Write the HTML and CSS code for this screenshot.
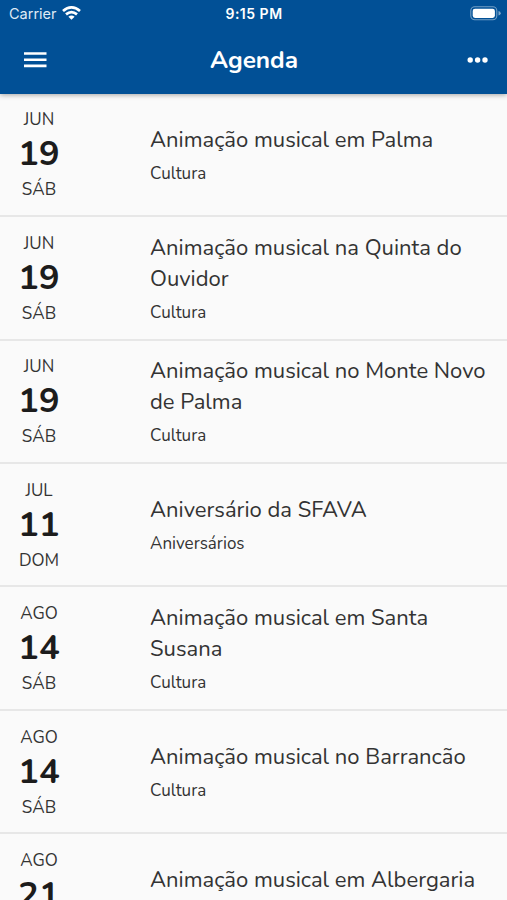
FILE: index.html
```html
<!DOCTYPE html>
<html lang="pt">
<head>
<meta charset="utf-8">
<title>Agenda</title>
<link rel="stylesheet" href="styles.css">
</head>
<body>
<header class="header">
  <div class="status">
    <div class="carrier"><span>Carrier</span>
      <svg class="wifi" width="19" height="14" viewBox="0 0 19 14" fill="none" stroke="#fff" stroke-width="2.7"><path d="M1 5.1Q9.5-2.3 18 5.1"/><path d="M4 8.4Q9.5 3.7 15 8.4"/><path d="M6.4 10.8Q9.5 8 12.6 10.8L9.5 13.8Z" fill="#fff" stroke="none"/></svg>
    </div>
    <span class="time">9:15 PM</span>
    <svg class="battery" width="31" height="15" viewBox="0 0 31 15"><rect x=".8" y=".8" width="26" height="13" rx="4" fill="none" stroke="#fff" stroke-opacity=".45" stroke-width="1.1"/><rect x="2.7" y="2.7" width="22.2" height="9.2" rx="2.3" fill="#fff"/><path d="M28.5 5Q30.7 5.6 30.7 7.3T28.5 9.6Z" fill="#fff" opacity=".5"/></svg>
  </div>
  <div class="toolbar">
    <svg width="24" height="18" viewBox="0 0 24 18" fill="#fff"><path d="M1 1.2h22.5v2.6H1zM1 7.4h22.5v2.6H1zM1 13.6h22.5v2.6H1z"/></svg>
    <h1>Agenda</h1>
    <svg class="more" width="22" height="8" viewBox="0 0 22 8" fill="#fff"><circle cx="3.2" cy="4" r="2.7"/><circle cx="10.6" cy="4" r="2.7"/><circle cx="18" cy="4" r="2.7"/></svg>
  </div>
</header>
<main>
  <article class="event"><div class="date"><span>JUN</span><b>19</b><span>SÁB</span></div><div class="info"><h2>Animação musical em Palma</h2><p>Cultura</p></div></article>
  <article class="event"><div class="date"><span>JUN</span><b>19</b><span>SÁB</span></div><div class="info"><h2>Animação musical na Quinta do<br>Ouvidor</h2><p>Cultura</p></div></article>
  <article class="event"><div class="date"><span>JUN</span><b>19</b><span>SÁB</span></div><div class="info"><h2>Animação musical no Monte Novo<br>de Palma</h2><p>Cultura</p></div></article>
  <article class="event"><div class="date"><span>JUL</span><b>11</b><span>DOM</span></div><div class="info"><h2>Aniversário da SFAVA</h2><p>Aniversários</p></div></article>
  <article class="event"><div class="date"><span>AGO</span><b>14</b><span>SÁB</span></div><div class="info"><h2>Animação musical em Santa<br>Susana</h2><p>Cultura</p></div></article>
  <article class="event"><div class="date"><span>AGO</span><b>14</b><span>SÁB</span></div><div class="info"><h2>Animação musical no Barrancão</h2><p>Cultura</p></div></article>
  <article class="event last"><div class="date"><span>AGO</span><b>21</b></div><div class="info"><h2>Animação musical em Albergaria</h2></div></article>
</main>
</body>
</html>
```
FILE: styles.css
```css
* { box-sizing: border-box; margin: 0; padding: 0; }
body {
  height: 900px;
  overflow: hidden;
  display: flex;
  flex-direction: column;
  background: #fafafa;
  color: #333;
  font-family: Nunito, Lato, sans-serif;
}
svg { display: block; flex: none; }
.header {
  flex: none;
  height: 93.5px;
  background: #015096;
  color: #fff;
  box-shadow: 0 1px 5px rgba(0, 0, 0, .35);
  z-index: 1;
}
.status {
  display: grid;
  grid-template-columns: 1fr auto 1fr;
  align-items: center;
  height: 27px;
  padding: 0 6px 0 9px;
  font: 14.5px Inter, sans-serif;
}
.carrier { display: flex; align-items: center; gap: 5px; color: #dfeaf5; }
.wifi { margin-top: -2px; }
.time { font-size: 14px; font-weight: 600; letter-spacing: .5px; margin-left: -2px; }
.battery { justify-self: end; margin-top: -1px; }
.toolbar {
  display: grid;
  grid-template-columns: 1fr auto 1fr;
  align-items: center;
  height: 66px;
  padding: 0 18px 0 23px;
}
.toolbar h1 { font-size: 24.4px; line-height: 30px; font-weight: 700; margin-left: -4px; }
.more { justify-self: end; }
.event {
  display: flex;
  align-items: center;
  height: 123.4px;
  padding-top: 2.2px;
  border-bottom: 2px solid #e7e7e7;
}
.event:first-child { height: 123.8px; }
.last { height: 66.6px; overflow: hidden; align-items: flex-start; padding-top: 14.6px; border: 0; }
.last .info { padding-top: 16.6px; }
.date {
  width: 78px;
  display: flex;
  flex-direction: column;
  align-items: center;
  font-size: 17px;
  line-height: 24px;
}
.date b { font-size: 34.4px; line-height: 46px; margin: -1px 0 1px; color: #1c1c1c; }
.info { margin-left: 72px; white-space: nowrap; }
.info h2 { font-size: 22.03px; line-height: 30.5px; font-weight: 400; margin-top: -.5px; }
.info p { font-size: 17px; line-height: 24px; margin-top: 6.5px; }
```
